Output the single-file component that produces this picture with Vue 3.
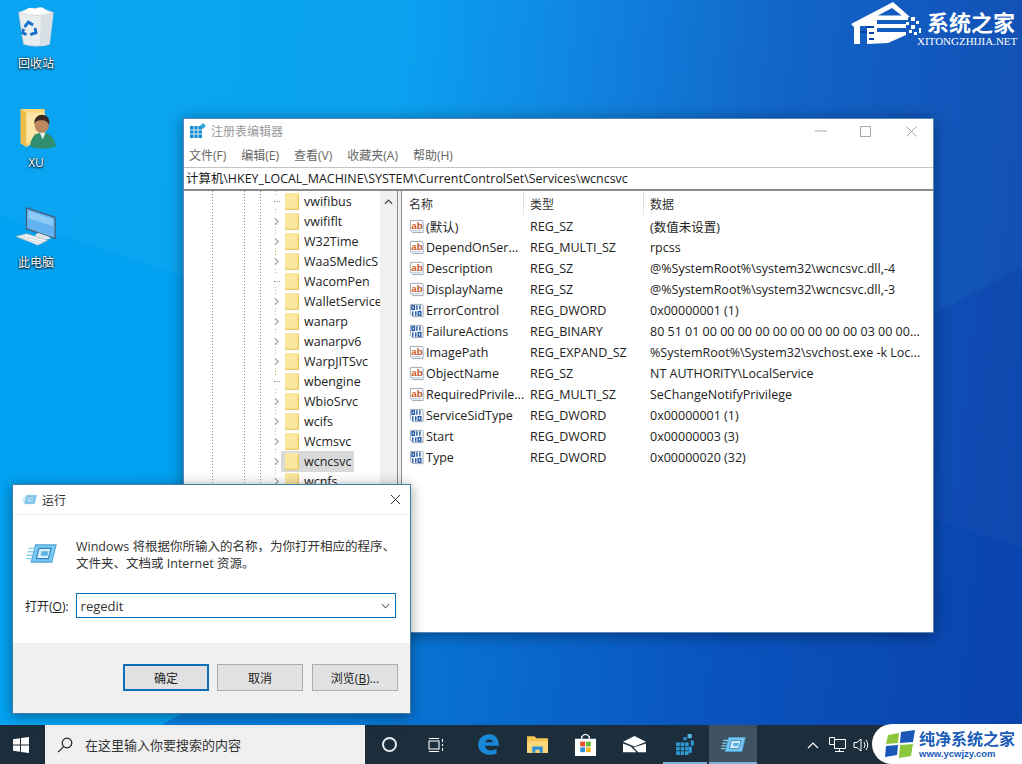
<script setup>
const desktopIcons = [
  { id: 'bin', label: '回收站', cls: 'di-bin' },
  { id: 'user', label: 'XU', cls: 'di-user' },
  { id: 'pc', label: '此电脑', cls: 'di-pc' },
]
const menus = ['文件(F)', '编辑(E)', '查看(V)', '收藏夹(A)', '帮助(H)']
const tree = [
  { n: 'vwifibus' }, { n: 'vwififlt', a: 1 }, { n: 'W32Time', a: 1 }, { n: 'WaaSMedicS', a: 1 },
  { n: 'WacomPen' }, { n: 'WalletService', a: 1 }, { n: 'wanarp', a: 1 }, { n: 'wanarpv6', a: 1 },
  { n: 'WarpJITSvc', a: 1 }, { n: 'wbengine' }, { n: 'WbioSrvc', a: 1 }, { n: 'wcifs', a: 1 },
  { n: 'Wcmsvc', a: 1 }, { n: 'wcncsvc', a: 1, sel: 1 }, { n: 'wcnfs', a: 1 },
]
const values = [
  ['ab', '(默认)', 'REG_SZ', '(数值未设置)'],
  ['ab', 'DependOnSer...', 'REG_MULTI_SZ', 'rpcss'],
  ['ab', 'Description', 'REG_SZ', '@%SystemRoot%\\system32\\wcncsvc.dll,-4'],
  ['ab', 'DisplayName', 'REG_SZ', '@%SystemRoot%\\system32\\wcncsvc.dll,-3'],
  ['bin', 'ErrorControl', 'REG_DWORD', '0x00000001 (1)'],
  ['bin', 'FailureActions', 'REG_BINARY', '80 51 01 00 00 00 00 00 00 00 00 00 03 00 00...'],
  ['ab', 'ImagePath', 'REG_EXPAND_SZ', '%SystemRoot%\\System32\\svchost.exe -k Loc...'],
  ['ab', 'ObjectName', 'REG_SZ', 'NT AUTHORITY\\LocalService'],
  ['ab', 'RequiredPrivile...', 'REG_MULTI_SZ', 'SeChangeNotifyPrivilege'],
  ['bin', 'ServiceSidType', 'REG_DWORD', '0x00000001 (1)'],
  ['bin', 'Start', 'REG_DWORD', '0x00000003 (3)'],
  ['bin', 'Type', 'REG_DWORD', '0x00000020 (32)'],
]
</script>

<template>
  <div class="desktop">
    <svg class="defs" width="0" height="0">
      <defs>
        <symbol id="run" viewBox="0 0 36 24">
          <path d="M11 2 L35 2 L30 22 L6 22 Z" fill="#7cc6ef" stroke="#4aa3da" stroke-width="1.200" />
          <path d="M15 6 L29 6 L26 18 L12 18 Z" fill="#d9f0fb" stroke="#2f86c4" stroke-width="1.400" />
          <path d="M18 9.500 L26 9.500 L25 14.500 L17 14.500 Z" fill="#5fb4e6" />
          <path d="M3 6h7M2 10h6M1 14h6M0 18h6" stroke="#8ad0f2" stroke-width="1.600" />
        </symbol>
        <symbol id="val-ab" viewBox="0 0 16 16">
          <path d="M1.500 1.500 H14 L15 3 V14.500 H4 L1.500 12 Z" fill="#fff" stroke="#98a4b2" />
          <path d="M2 12.500 H13" stroke="#c3d3e6" stroke-width="1.500" />
          <text x="2.500" y="10.500" font-size="10.500" font-weight="700" font-family="Liberation Sans, sans-serif" fill="#cf5a26">a</text>
          <text x="8.200" y="10.500" font-size="10.500" font-weight="700" font-family="Liberation Sans, sans-serif" fill="#c0562e">b</text>
        </symbol>
        <symbol id="val-bin" viewBox="0 0 16 16">
          <path d="M1.500 1.500 H14 L15 3 V14.500 H4 L1.500 12 Z" fill="#fff" stroke="#98a4b2" />
          <g fill="none" stroke="#1f57a8" stroke-width="1.500">
            <rect x="3.200" y="3" width="2.600" height="3.800" /><path d="M8.400 2.500v4.800M11.600 2.500v4.800" />
            <path d="M4 8.700v4.800M7.200 8.700v4.800" /><rect x="9.800" y="9.200" width="2.800" height="3.800" />
          </g>
        </symbol>
        <symbol id="folder" viewBox="0 0 14 17" preserveAspectRatio="none">
          <rect x="0" y="0" width="14" height="17" fill="#fce79f" />
          <path d="M12.600 3 L14 0 V17 H12.600Z" fill="#efc964" />
          <rect x="0" y="15.600" width="14" height="1.400" fill="#eccb6c" />
        </symbol>
      </defs>
    </svg>

    <div v-for="d in desktopIcons" :key="d.id" class="desk-icon" :class="d.cls">
      <svg v-if="d.id === 'bin'" class="desk-svg" viewBox="0 0 42 44">
        <path d="M3 7 L39 7 L35 40 Q21 44 8 40 Z" fill="#e8edf0" stroke="#c7ced3" />
        <path d="M26 9 L39 7 L35 40 Q30 42 25 42Z" fill="#d8dfe4" />
        <path d="M3 7 Q20 -2 39 7 Q21 13 3 7Z" fill="#f6f8f9" stroke="#d5dadd" />
        <path d="M9 6 Q14 -1 20 4 Q26 -2 33 6 Q22 10 9 6Z" fill="#fff" />
        <g fill="none" stroke="#1770c8" stroke-width="3">
          <path d="M9 22 L13 17 L18 20" />
          <path d="M20 23 L21 28 L15 30" />
          <path d="M11 30 L7 28 L8 24" />
        </g>
      </svg>
      <svg v-else-if="d.id === 'user'" class="desk-svg" viewBox="0 0 42 44">
        <path d="M5 2 H30 V30 L11 42 L5 38 Z" fill="#fbd878" />
        <path d="M5 2 L11 6 V42 L5 38 Z" fill="#f1bd4c" />
        <path d="M11 6 H30 V26 L11 38 Z" fill="#fde7a8" />
        <ellipse cx="27" cy="19" rx="7.500" ry="8.500" fill="#bb8860" />
        <path d="M19 18 Q19 8 28 8 Q36 9 35 19 Q32 13 26 14 Q21 14 19 18Z" fill="#3a2a22" />
        <path d="M15 42 Q15 29 25 27 L31 27 Q40 30 42 41 Q29 46 15 42Z" fill="#2f8f6f" />
        <path d="M25 27 L28 34 L31 27Z" fill="#eef2ee" />
      </svg>
      <svg v-else class="desk-svg" viewBox="0 0 44 42">
        <path d="M12 1 L42 11 V33 L12 23 Z" fill="#62b2f0" stroke="#46586a" stroke-width="1.200" />
        <path d="M14 4 L40 13 V20 L14 12 Z" fill="#8fcbf7" />
        <path d="M24 27 L35 31 L38 33 L30 35 L20 31 Z" fill="#dfe5ea" />
        <path d="M1 31 L12 28 L34 35 L24 40 Z" fill="#f2f4f6" stroke="#a6b0b8" stroke-width=".7" />
        <path d="M5 31.500 L26 38M9 30.500 L30 36.500" stroke="#b7c0c8" stroke-width=".6" />
      </svg>
      <span class="desk-label">{{ d.label }}</span>
    </div>

    <div class="wm-top">
      <svg class="wm-house" viewBox="0 0 100 50">
        <path d="M21 24 L63 2 L80 17 L75 18 L62 8 L48 15.500 L78 15.500 L78 20 L47 20 L47 24 L76 24 L76 28 L47 28 L47 32 L76 32 L76 35 L58 43 L37 44 L37 26 L30 26 L30 44 L24 44 L24 27 Z" fill="#fff" />
        <path d="M30 31 H37 V33 H30Z M36 26 H44 V28 H36Z M39 32 H44 V34 H39Z M39 38 H44 V40 H39Z" fill="#0b3fa8" />
        <g fill="#fff">
          <rect x="81" y="17" width="4" height="4" /><rect x="86" y="21" width="3" height="3" />
          <rect x="81" y="25" width="4" height="4" /><rect x="76" y="22" width="3" height="3" />
          <rect x="89" y="28" width="2" height="5" /><rect x="84" y="32" width="3" height="3" />
          <rect x="79" y="30" width="3" height="3" />
        </g>
      </svg>
      <div class="wm-text">
        <span class="wm-cn">系统之家</span>
        <span class="wm-en">XITONGZHIJIA.NET</span>
      </div>
    </div>

    <section class="regedit">
      <header class="re-title">
        <svg class="re-logo" viewBox="0 0 16 16">
          <path d="M0 3h12v12H0z" fill="#1a8fd0" />
          <path d="M0 7h12M0 11h12M4 3v12M8 3v12" stroke="#fff" stroke-width=".8" />
          <path d="M13 0l3 3-3 3-3-3z" fill="#36a4de" />
        </svg>
        <span class="re-name">注册表编辑器</span>
        <div class="caption">
          <svg class="cap-min" viewBox="0 0 12 12"><path d="M0 6h12" /></svg>
          <svg viewBox="0 0 11 11"><path d="M.5.5h10v10H.5z" /></svg>
          <svg viewBox="0 0 11 11"><path d="M.5.5l10 10M10.500.5l-10 10" /></svg>
        </div>
      </header>
      <nav class="re-menu"><span v-for="m in menus" :key="m">{{ m }}</span></nav>
      <div class="re-addr">计算机\HKEY_LOCAL_MACHINE\SYSTEM\CurrentControlSet\Services\wcncsvc</div>
      <div class="re-body">
        <div class="tree-pane">
          <ul class="tree">
            <li v-for="t in tree" :key="t.n" class="tree-row">
              <span class="tw">
                <svg v-if="t.a" viewBox="0 0 6 10" class="chev"><path d="M1 1l4 4-4 4" /></svg>
                <span v-else class="dots"></span>
              </span>
              <span class="item" :class="{ sel: t.sel }">
                <svg class="folder"><use href="#folder" /></svg>
                <span class="tname">{{ t.n }}</span>
              </span>
            </li>
          </ul>
          <div class="vbar">
            <svg viewBox="0 0 10 6" class="up"><path d="M1 5l4-4 4 4" /></svg>
          </div>
        </div>
        <div class="split"></div>
        <div class="list">
          <div class="cols head">
            <span class="c1 hc">名称</span><span class="c2 hc">类型</span><span class="c3">数据</span>
          </div>
          <div v-for="v in values" :key="v[1]" class="cols row">
            <span class="c1 name">
              <svg class="vi"><use :href="'#val-' + v[0]" /></svg>{{ v[1] }}
            </span>
            <span class="c2">{{ v[2] }}</span>
            <span class="c3">{{ v[3] }}</span>
          </div>
        </div>
      </div>
    </section>

    <section class="rundlg">
      <header class="run-title">
        <svg class="run-mini"><use href="#run" /></svg>
        <span>运行</span>
        <svg class="run-x" viewBox="0 0 12 12"><path d="M1 1l10 10M11 1L1 11" /></svg>
      </header>
      <div class="run-body">
        <div class="run-msg">
          <svg class="run-big"><use href="#run" /></svg>
          <p>Windows 将根据你所输入的名称，为你打开相应的程序、<br />文件夹、文档或 Internet 资源。</p>
        </div>
        <div class="run-open">
          <label>打开(<u>O</u>):</label>
          <div class="combo">
            <span>regedit</span>
            <svg viewBox="0 0 10 6"><path d="M1 1l4 4 4-4" /></svg>
          </div>
        </div>
      </div>
      <footer class="run-foot">
        <button class="btn primary">确定</button>
        <button class="btn">取消</button>
        <button class="btn">浏览(<u>B</u>)...</button>
      </footer>
    </section>

    <footer class="taskbar">
      <div class="start">
        <svg viewBox="0 0 16 16"><path d="M0 2.200 L7 1.200 V7.500 H0Z M8 1 L16 0 V7.500 H8Z M0 8.500 H7 V14.800 L0 13.800Z M8 8.500 H16 V16 L8 15Z" fill="#fff" /></svg>
      </div>
      <div class="search">
        <svg viewBox="0 0 16 16"><circle cx="10" cy="6" r="4.800" /><path d="M6.600 9.600 L1 15.200" /></svg>
        <span>在这里输入你要搜索的内容</span>
      </div>
      <div class="tb-apps">
        <div class="tb"><span class="cortana"></span></div>
        <div class="tb">
          <svg class="ic" viewBox="0 0 16 16"><path d="M1 4h10v8H1zM1 1.500h10M1 14.500h10M14.500 2v3M14.500 7v2M14.500 11v3" fill="none" stroke="#fff" stroke-width="1.100" /></svg>
        </div>
        <div class="tb">
          <svg class="ic big" viewBox="0 0 20 20"><path d="M1 11 C1 4 6 1 11 1 C16 1 19 5 19 11 H7 C7.500 15 12 16.500 17 14 V18 C10 20.500 2 18 1 11 Z M7 8 H14 C13.500 5 8 5 7 8 Z" fill="#1a88d8" /></svg>
        </div>
        <div class="tb">
          <svg class="ic big" viewBox="0 0 22 18"><path d="M1 1h7l2 2h11v14H1z" fill="#f4c552" /><path d="M1 6h20v11H1z" fill="#fbd878" /><path d="M6 11h10v6h-3v-3H9v3H6z" fill="#2d8fd8" /></svg>
        </div>
        <div class="tb">
          <svg class="ic big" viewBox="0 0 22 24"><path d="M0 6h22v18H0z" fill="#fff" /><path d="M7 8 V4 Q11-1 15 4 V8" fill="none" stroke="#fff" stroke-width="1.400" /><path d="M5.500 9h5v5h-5z" fill="#e2502a" /><path d="M11.500 9h5v5h-5z" fill="#6cb83a" /><path d="M5.500 15h5v5h-5z" fill="#2d8fd8" /><path d="M11.500 15h5v5h-5z" fill="#f5b91e" /></svg>
        </div>
        <div class="tb">
          <svg class="ic big" viewBox="0 0 24 18"><path d="M0 6 L12 0 L24 6 L12 11 Z" fill="#fff" /><path d="M0 8 L8 11 L14 17 H0Z" fill="#fff" /><path d="M24 8 V17 H16 L11 12 Z" fill="#fff" /></svg>
        </div>
        <div class="tb running">
          <svg class="ic big" viewBox="0 0 20 22">
            <rect x="1" y="9" width="12" height="12" fill="#2f9ad6" />
            <path d="M1 13h12M1 17h12M5 9v12M9 9v12" stroke="#1c2e3b" stroke-width=".8" />
            <rect x="12" y="1" width="4" height="4" fill="#58b6e6" /><rect x="8" y="4" width="3" height="3" fill="#2f9ad6" /><rect x="15" y="7" width="3" height="5" fill="#2f9ad6" /><rect x="13" y="13" width="3" height="6" fill="#2f9ad6" />
          </svg>
        </div>
        <div class="tb active">
          <svg class="ic wide"><use href="#run" /></svg>
        </div>
      </div>
      <div class="tray">
        <svg viewBox="0 0 12 8" class="t-chev"><path d="M1 7l5-5 5 5" /></svg>
        <svg viewBox="0 0 17 16" class="t-net"><path d="M.5.500h5v2h11v9h-11V7.500h-5zM5.500 2.500v5M10.500 11.500v3M6 14.500h9" /></svg>
        <svg viewBox="0 0 17 16" class="t-vol"><path d="M1 5.500h3L8 2v12L4 10.500H1zM11 5q2 3 0 6M13 3q3.500 5 0 10" /></svg>
      </div>
    </footer>

    <div class="wm-bottom">
      <svg class="wm-win" viewBox="0 0 30 30">
        <path d="M3 6 L14 4 L13 14 L1 15Z" fill="#8cc63f" />
        <path d="M16 3 L30 1 L28 13 L15 14Z" fill="#1a56b8" />
        <path d="M1 17 L13 16 L12 26 L0 28Z" fill="#1a56b8" />
        <path d="M15 16 L28 15 L26 27 L14 29Z" fill="#8cc63f" />
      </svg>
      <div class="wm-b-text">
        <span class="wm-b-cn">纯净系统之家</span>
        <span class="wm-b-en">www.ycwjzy.com</span>
      </div>
    </div>
  </div>
</template>

<style>
html, body { margin: 0; padding: 0; background: #0a6fd0; }
</style>

<style scoped>
* { box-sizing: border-box; }
.desktop {
  position: relative;
  width: 1022px;
  height: 764px;
  overflow: hidden;
  display: flex;
  flex-direction: column;
  justify-content: flex-end;
  font-family: "Open Sans", "Noto Sans CJK SC", sans-serif;
  color: #222;
  background:
    linear-gradient(152deg, transparent 0 62%, rgba(10, 60, 170, .35) 62% 100%),
    linear-gradient(18deg, transparent 0 50%, rgba(255, 255, 255, .03) 50% 100%),
    linear-gradient(96deg, #02a2f2 0%, #03a0f0 36%, #0883e0 52%, #0a5fc6 72%, #0b46ae 100%);
}
.defs { position: absolute; }

.desk-icon {
  position: absolute;
  width: 72px;
  display: flex;
  flex-direction: column;
  align-items: center;
  color: #fff;
  font-size: 12px;
  text-shadow: 0 1px 2px #000, 0 0 2px rgba(0, 0, 0, .8);
}
.desk-svg { width: 42px; height: 42px; display: block; }
.desk-label { line-height: 16px; margin-top: 8px; }
.di-bin { left: 0; top: 6px; }
.di-user { left: 0; top: 107px; }
.di-user .desk-label { margin-top: 6px; }
.di-pc { left: 0; top: 206px; }
.di-pc .desk-label { margin-top: 7px; }

.wm-top {
  position: absolute;
  right: 0;
  top: 0;
  display: flex;
  width: 192px;
  height: 50px;
}
.wm-house { width: 100px; height: 50px; flex: none; }
.wm-text {
  display: flex;
  flex-direction: column;
  margin-left: -13px;
  color: #fff;
}
.wm-cn { font: 700 22px/23px "Noto Sans CJK SC", sans-serif; margin: 10px 0 0 10px; white-space: nowrap; }
.wm-en { font: 11px/12px "Liberation Serif", serif; margin-top: 2px; white-space: nowrap; }

.regedit {
  position: absolute;
  left: 183px;
  top: 118px;
  width: 751px;
  height: 515px;
  background: #fff;
  border: 1px solid #5a87b8;
  box-shadow: 0 2px 14px rgba(0, 0, 0, .4);
  display: flex;
  flex-direction: column;
  font-size: 12.5px;
}
.re-title { height: 24px; display: flex; align-items: center; padding: 0 16px 0 6px; flex: none; }
.re-logo { width: 16px; height: 16px; }
.re-name { color: #9a9a9a; font-size: 12px; margin-left: 5px; }
.caption { margin-left: auto; display: flex; align-items: center; gap: 34px; }
.caption svg { width: 11px; height: 11px; fill: none; stroke: #a8a8a8; stroke-width: 1; }
.caption .cap-min { width: 12px; height: 12px; margin-right: -1px; }
.caption svg:nth-child(2) { margin-right: 1px; }
.re-menu { height: 24px; display: flex; gap: 15px; padding-left: 5px; align-items: center; color: #666; font-size: 12px; flex: none; }
.re-addr {
  height: 24px;
  flex: none;
  border-top: 1px solid #c4c4c4;
  border-bottom: 2px solid #8a8a8a;
  line-height: 21px;
  padding-left: 2px;
  font-size: 12.45px;
  color: #1a1a1a;
  white-space: nowrap;
  overflow: hidden;
}
.re-body { flex: 1; display: flex; min-height: 0; }

.tree-pane { width: 214px; flex: none; display: flex; border-right: 1px solid #8a8a8a; }
.tree {
  list-style: none;
  margin: 0;
  padding: 0 0 0 90px;
  flex: 1;
  min-width: 0;
  overflow: hidden;
  background-image:
    repeating-linear-gradient(to bottom, #8a8a8a 0 1px, transparent 1px 3px),
    repeating-linear-gradient(to bottom, #8a8a8a 0 1px, transparent 1px 3px),
    repeating-linear-gradient(to bottom, #8a8a8a 0 1px, transparent 1px 3px),
    repeating-linear-gradient(to bottom, #c9b57a 0 1px, transparent 1px 3px);
  background-size: 1px 100%;
  background-repeat: no-repeat;
  background-position: 28px 0, 60px 0, 76px 0, 91px 0;
}
.tree-row { height: 20px; display: flex; align-items: center; white-space: nowrap; }
.tw { width: 7px; display: flex; align-items: center; flex: none; background: #fff; height: 12px; }
.chev { width: 5px; height: 9px; fill: none; stroke: #a6a6a6; stroke-width: 1.600; }
.dots { width: 6px; border-top: 1px dotted #999; }
.item { display: flex; align-items: center; height: 21px; padding-left: 4px; flex: none; }
.item.sel { background: #d9d9d9; padding-right: 2px; }
.folder { width: 14px; height: 17px; display: block; flex: none; }
.tname { margin-left: 5px; font-size: 12.5px; color: #222; }
.vbar { width: 17px; flex: none; background: #f0f0f0; display: flex; justify-content: center; }
.up { width: 9px; height: 6px; margin-top: 8px; fill: none; stroke: #555; stroke-width: 1.600; }
.split { width: 4px; flex: none; background: #f0f0f0; border-right: 1px solid #8a8a8a; }

.list { flex: 1; min-width: 0; padding-left: 7px; overflow: hidden; }
.cols { display: grid; grid-template-columns: 116px 120px 1fr; align-items: center; white-space: nowrap; }
.head { height: 25px; }
.head span { height: 23px; line-height: 25px; color: #333; font-size: 12px; }
.hc { border-right: 1px solid #e3e3e3; margin-right: 1px; }
.row { height: 21px; }
.row .c2, .head .c2 { padding-left: 5px; }
.row .c3, .head .c3 { padding-left: 5px; }
.name { display: flex; align-items: center; gap: 2px; }
.vi { width: 15px; height: 15px; flex: none; }

.rundlg {
  position: absolute;
  left: 12px;
  top: 484px;
  width: 399px;
  height: 230px;
  background: #fff;
  border: 1px solid #3f7fa8;
  box-shadow: 0 2px 12px rgba(0, 0, 0, .4);
  display: flex;
  flex-direction: column;
  font-size: 12px;
}
.run-title { height: 30px; flex: none; display: flex; align-items: center; padding-left: 9px; border-bottom: 1px solid #eee; color: #333; }
.run-mini { width: 15px; height: 11px; margin-right: 5px; opacity: .85; }
.run-x { width: 11px; height: 11px; margin-left: auto; margin-right: 9px; fill: none; stroke: #222; stroke-width: 1; }
.run-body { flex: 1; padding: 23px 14px 0 12px; }
.run-msg { display: flex; align-items: flex-start; }
.run-big { width: 31px; height: 21px; margin: 5px 0 0 1px; flex: none; }
.run-msg p { margin: 0 0 0 19px; line-height: 17px; color: #333; white-space: nowrap; font-size: 12.5px; }
.run-open { display: flex; align-items: center; margin-top: 21px; gap: 7px; }
.run-open label { color: #222; white-space: nowrap; }
.combo { flex: 1; height: 25px; border: 1px solid #0a70b8; display: flex; align-items: center; justify-content: space-between; padding: 0 5px 0 4px; font-size: 13px; color: #333; }
.combo svg { width: 9px; height: 6px; fill: none; stroke: #666; stroke-width: 1.200; }
.run-foot { height: 70px; flex: none; background: #f0f0f0; display: flex; justify-content: flex-end; gap: 8px; padding: 21px 12px 0 0; align-items: flex-start; }
.btn {
  width: 86px;
  height: 27px;
  font: 12px "Open Sans", "Noto Sans CJK SC", sans-serif;
  color: #222;
  background: #e1e1e1;
  border: 1px solid #adadad;
  padding: 0;
}
.btn:last-child { margin-left: 1px; }
.btn.primary { border: 2px solid #0a70b8; }

.taskbar {
  height: 39px;
  flex: none;
  background: #1c2e3b;
  display: flex;
  align-items: stretch;
}
.start { width: 45px; display: flex; align-items: center; justify-content: center; }
.start svg { width: 16px; height: 16px; margin-right: 3px; }
.search { width: 320px; background: #f0f0f0; display: flex; align-items: center; padding-left: 12px; font-size: 13px; color: #333; }
.search svg { width: 16px; height: 16px; fill: none; stroke: #222; stroke-width: 1.200; margin-right: 12px; }
.tb-apps { display: flex; padding-left: 2px; }
.tb { width: 44px; display: flex; align-items: center; justify-content: center; flex: none; }
.tb:nth-child(2) { margin-left: 3px; }
.tb:nth-child(3) { margin-left: 8px; }
.tb:nth-child(4) { margin-left: 5px; }
.tb:nth-child(5) { margin-left: 4px; }
.tb:nth-child(6) { margin-left: 5px; }
.tb:nth-child(7) { margin-left: 7px; }
.tb:nth-child(8) { margin-left: 2px; width: 48px; }
.ic { width: 16px; height: 16px; }
.ic.big { width: 23px; height: 23px; }
.ic.wide { width: 25px; height: 17px; }
.cortana { width: 15px; height: 15px; border: 2.400px solid #e9edf0; border-radius: 50%; }
.running { border-bottom: 2px solid #7fb2d8; padding-top: 2px; }
.active { background: #3e5260; border-bottom: 2px solid #7fb2d8; padding-top: 2px; }
.tray { display: flex; align-items: center; margin-left: 50px; }
.t-chev { width: 12px; height: 8px; fill: none; stroke: #fff; stroke-width: 1.200; margin-right: 10px; }
.t-net, .t-vol { width: 17px; height: 16px; fill: none; stroke: #fff; stroke-width: 1; }
.t-net { margin-right: 7px; }

.wm-bottom {
  position: absolute;
  right: 0;
  bottom: 0;
  width: 150px;
  height: 40px;
  background: #fff;
  border-radius: 20px 0 0 20px;
  display: flex;
  align-items: center;
  padding-left: 13px;
  gap: 4px;
}
.wm-win { width: 30px; height: 30px; flex: none; }
.wm-b-text { display: flex; flex-direction: column; }
.wm-b-cn { font: 700 16px/19px "Noto Sans CJK SC", sans-serif; color: #1b5db8; white-space: nowrap; }
.wm-b-en { font: 700 9.500px/11px "Liberation Sans", sans-serif; color: #1b5db8; white-space: nowrap; }
</style>
